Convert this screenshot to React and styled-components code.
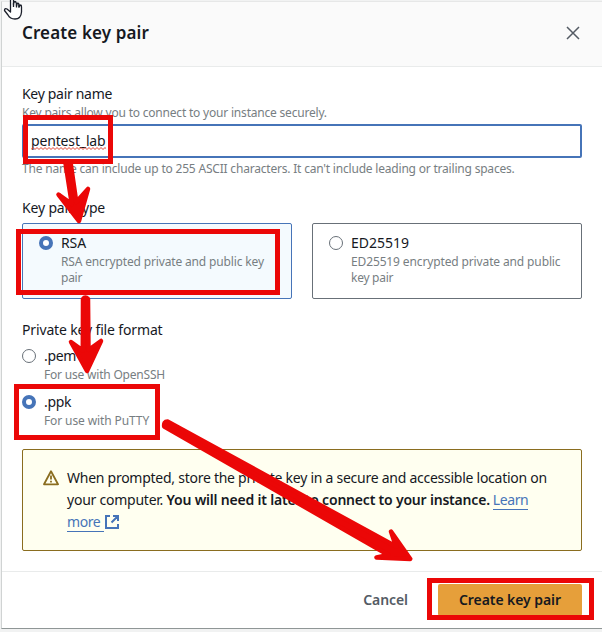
import React from 'react';
import styled, { createGlobalStyle } from 'styled-components';

const GlobalStyle = createGlobalStyle`
  * { box-sizing: border-box; }
  body { margin: 0; background: #f1f2f2; overflow: hidden; }
  p, h1 { margin: 0; }
`;

const Screen = styled.div`
  position: relative;
  width: 602px;
  height: 632px;
  padding: 1px 0 0 1px;
  overflow: hidden;
  background: #f1f2f2;
  color: #16191f;
  font-family: "Noto Sans", sans-serif;
  font-size: 14px;
  line-height: 22px;
`;

const Dialog = styled.section`
  display: flex;
  flex-direction: column;
  height: 628px;
  border: 1px solid #d0d3d3;
  border-right: 0;
  border-top-color: #e6e7e7;
  border-bottom-color: #8f9696;
  background: #fff;
`;

const Header = styled.header`
  display: flex;
  align-items: center;
  justify-content: space-between;
  flex: none;
  height: 65px;
  padding: 0 22px 2px 20px;
  border-bottom: 1px solid #e9ebeb;
  background: #fafafa;
`;

const Title = styled.h1`
  font-size: 17px;
  font-weight: 600;
  line-height: 22px;
  letter-spacing: 0.12px;
`;

const CloseButton = styled.button`
  display: flex;
  padding: 0;
  border: 0;
  background: none;
  color: #545b64;
`;

const Body = styled.div`
  display: flex;
  flex-direction: column;
  flex: 1;
  padding: 16px 20px 20px;
`;

const Field = styled.div`
  display: flex;
  flex-direction: column;
  margin-bottom: 20px;
`;

const Label = styled.p`
  letter-spacing: ${(p) => p.$track ?? 0}px;
  white-space: nowrap;
`;

const Hint = styled.p`
  color: #777e82;
  font-size: 12px;
  line-height: 16px;
  letter-spacing: ${(p) => p.$track ?? 0}px;
  white-space: nowrap;
`;

const HintLine = styled.span`
  display: block;
  letter-spacing: ${(p) => p.$track}px;
`;

const TextBox = styled.div`
  display: flex;
  align-items: center;
  height: 34px;
  margin: 3px 0;
  padding: 0 7px;
  border: 2px solid #4674b8;
  border-radius: 2px;
  letter-spacing: -0.15px;
`;

const Misspelled = styled.span`
  display: flex;
  flex-direction: column;
  height: 22px;
`;

const Squiggle = styled.svg`
  flex: none;
  margin-top: -5px;
`;

const Tiles = styled.div`
  display: grid;
  grid-template-columns: 1fr 1fr;
  gap: 20px;
  margin-top: 4px;
`;

const Tile = styled.div`
  display: flex;
  gap: 8px;
  height: 76px;
  padding: 8px 16px;
  border: 1px solid ${(p) => (p.$selected ? '#4674b8' : '#687078')};
  border-radius: 2px;
  background: ${(p) => (p.$selected ? '#f4fafe' : '#fff')};
`;

const Options = styled.div`
  display: flex;
  flex-direction: column;
  gap: 8px;
  margin-top: 4px;
`;

const Option = styled.div`
  display: flex;
  gap: 8px;
`;

const Radio = styled.span`
  flex: none;
  width: 14px;
  height: 14px;
  margin-top: 4px;
  border: ${(p) => (p.$checked ? '4px solid #4674b8' : '1px solid #687078')};
  border-radius: 50%;
  background: #fff;
`;

const Alert = styled.div`
  display: flex;
  gap: 8px;
  height: 102px;
  padding: 17px 20px;
  border: 1px solid #8a6d1f;
  border-radius: 2px;
  background: #fffff0;
`;

const AlertIcon = styled.svg`
  flex: none;
  margin-top: 3px;
`;

const AlertLine = styled.p`
  display: flex;
  height: 22px;
  white-space: pre;
`;

const Run = styled.span`
  letter-spacing: ${(p) => p.$track}px;
  font-weight: ${(p) => (p.$bold ? 600 : 400)};
`;

const Link = styled.a`
  height: 21px;
  margin-left: ${(p) => p.$indent ?? 0}px;
  padding-right: ${(p) => p.$trail ?? 0}px;
  border-bottom: 1px solid #4674b8;
  color: #4674b8;
  letter-spacing: -0.4px;
`;

const ExternalIcon = styled.svg`
  margin: 4px 0 0 1px;
`;

const Footer = styled.footer`
  display: flex;
  align-items: center;
  justify-content: flex-end;
  flex: none;
  gap: 30px;
  height: 57px;
  padding-right: 20px;
  border-top: 1px solid #e9ebeb;
`;

const Button = styled.button`
  width: ${(p) => (p.$primary ? '144px' : 'auto')};
  height: 32px;
  margin-bottom: 1px;
  padding: 0;
  border: 0;
  border-radius: 2px;
  background: ${(p) => (p.$primary ? '#e69f3a' : 'none')};
  color: ${(p) => (p.$primary ? '#16191f' : '#545b64')};
  font: 600 14px/22px "Noto Sans", sans-serif;
  letter-spacing: -0.07px;
`;

const Annotations = styled.svg`
  position: absolute;
  inset: 0;
`;

const Cursor = styled.svg`
  position: absolute;
  top: 0;
  left: 3px;
`;

const FRAMES = [
  [23, 115, 90, 49],
  [16, 229, 264, 66],
  [14, 384, 146, 56],
  [427, 578, 167, 42],
];

export default function App() {
  return (
    <Screen>
      <GlobalStyle />
      <Dialog>
        <Header>
          <Title>Create key pair</Title>
          <CloseButton aria-label="Close">
            <svg width="14" height="14" viewBox="0 0 14 14" stroke="currentColor" strokeWidth="1.5">
              <path d="M1 1l12 12M13 1L1 13" />
            </svg>
          </CloseButton>
        </Header>
        <Body>
          <Field>
            <Label $track={-0.31}>Key pair name</Label>
            <Hint $track={-0.2}>Key pairs allow you to connect to your instance securely.</Hint>
            <TextBox>
              <Misspelled>
                pentest_lab
                <Squiggle width="75" height="3" viewBox="0 0 75 3" fill="none" stroke="#e0402f">
                  <path d={'M0 2.5' + 'l2 -2l2 2'.repeat(19)} />
                </Squiggle>
              </Misspelled>
            </TextBox>
            <Hint $track={-0.2}>
              The name can include up to 255 ASCII characters. It can't include leading or trailing spaces.
            </Hint>
          </Field>
          <Field>
            <Label $track={-0.17}>Key pair type</Label>
            <Tiles>
              <Tile $selected>
                <Radio $checked />
                <div>
                  <Label $track={-0.1}>RSA</Label>
                  <Hint>
                    <HintLine $track={-0.15}>RSA encrypted private and public key</HintLine>
                    <HintLine $track={-0.25}>pair</HintLine>
                  </Hint>
                </div>
              </Tile>
              <Tile>
                <Radio />
                <div>
                  <Label>ED25519</Label>
                  <Hint>
                    <HintLine $track={-0.13}>ED25519 encrypted private and public</HintLine>
                    <HintLine $track={-0.27}>key pair</HintLine>
                  </Hint>
                </div>
              </Tile>
            </Tiles>
          </Field>
          <Field>
            <Label $track={-0.15}>Private key file format</Label>
            <Options>
              <Option>
                <Radio />
                <div>
                  <Label $track={-0.3}>.pem</Label>
                  <Hint $track={-0.2}>For use with OpenSSH</Hint>
                </div>
              </Option>
              <Option>
                <Radio $checked />
                <div>
                  <Label $track={-0.3}>.ppk</Label>
                  <Hint $track={-0.11}>For use with PuTTY</Hint>
                </div>
              </Option>
            </Options>
          </Field>
          <Alert>
            <AlertIcon width="16" height="16" viewBox="0 0 16 16" fill="none" stroke="#8a6d1f" strokeWidth="1.8" strokeLinejoin="round">
              <path d="M8 1.3L15 14.3H1z" />
              <path d="M8 5.500v4M8 10.800v1.800" />
            </AlertIcon>
            <div>
              <AlertLine>
                <Run $track={-0.26}>When prompted, store the private key in a secure and accessible location on</Run>
              </AlertLine>
              <AlertLine>
                <Run $track={-0.24}>your computer. </Run>
                <Run $bold $track={-0.2}>You will need it later to connect to your instance.</Run>
                <Link $indent={3}>Learn</Link>
              </AlertLine>
              <AlertLine>
                <Link $trail={3.5}>more</Link>
                <ExternalIcon width="14" height="14" viewBox="0 0 14 14" fill="none" stroke="#4674b8" strokeWidth="2">
                  <path d="M5 1H1v12h12V9M8 1h5v5M13 1L6.5 7.5" />
                </ExternalIcon>
              </AlertLine>
            </div>
          </Alert>
        </Body>
        <Footer>
          <Button>Cancel</Button>
          <Button $primary>Create key pair</Button>
        </Footer>
      </Dialog>
      <Annotations width="602" height="632" viewBox="0 0 602 632">
        <g fill="none" stroke="#eb0707" strokeWidth="5">
          {FRAMES.map(([x, y, w, h]) => (
            <rect key={y} x={x + 2.5} y={y + 2.5} width={w - 5} height={h - 5} />
          ))}
        </g>
        <g fill="#eb0707" stroke="#eb0707" strokeWidth="4.5" strokeLinejoin="round">
          <path d="M65.3 162L70.5 162L76.3 202L88 189L79 221L58.5 194.500L71.800 204Z" />
          <path d="M83 299Q85.300 296 88 299L88.500 350L101 341L87 371L71 342L82.800 350.500Z" />
          <path d="M167.500 421.500Q163.500 421.500 164.200 426.500L388.500 555L376.500 557.500L410.300 559L391 531.500L396 546.500Z" />
        </g>
      </Annotations>
      <Cursor width="20" height="20" viewBox="0 0 20 20" fill="#fff" stroke="#1b1f2a" strokeWidth="1.3" strokeLinejoin="round">
        <path d="M7.500 12V-2Q7.500-3.500 9-3.500T10.500-2V5V3.500Q12-.5 13.500 3.500V6Q14.500 1 16 4.500V7Q18.500 3 18.500 7V12Q18 19 12 19Q7 19 5 15L1.500 10.500Q1.500 8 4 9Z" />
        <path d="M10.500 3v4M13.500 3.500v4M16 4.500v3" />
      </Cursor>
    </Screen>
  );
}
